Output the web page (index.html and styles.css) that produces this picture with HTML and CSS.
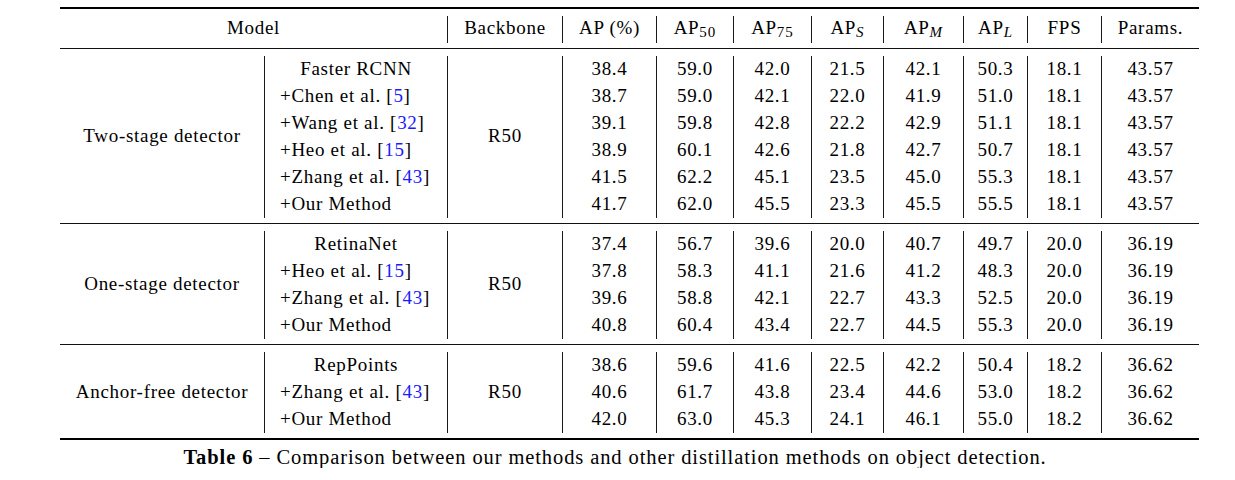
FILE: index.html
```html
<!DOCTYPE html>
<html>
<head>
<meta charset="utf-8">
<link rel="stylesheet" href="styles.css">
</head>
<body>
<div class="page">
<table class="results">
  <colgroup>
    <col class="c-group"><col class="c-method"><col class="c-bb"><col class="c-ap"><col class="c-ap50"><col class="c-ap75"><col class="c-aps"><col class="c-apm"><col class="c-apl"><col class="c-fps"><col class="c-params">
  </colgroup>
  <tr class="rule thick"><td colspan="11"></td></tr>
  <tr class="gap g-head-top"><td colspan="11"></td></tr>
  <tr class="head">
    <td colspan="2" class="first">Model</td>
    <td>Backbone</td>
    <td>AP (%)</td>
    <td>AP<sub>50</sub></td>
    <td>AP<sub>75</sub></td>
    <td>AP<sub class="it">S</sub></td>
    <td>AP<sub class="it">M</sub></td>
    <td>AP<sub class="it">L</sub></td>
    <td>FPS</td>
    <td>Params.</td>
  </tr>
  <tr class="gap g-before"><td colspan="11"></td></tr>
  <tr class="rule"><td colspan="11"></td></tr>
  <tr class="gap g-after"><td colspan="11"></td></tr>

  <tr>
    <td rowspan="6" class="first group">Two-stage detector</td>
    <td class="method base">Faster RCNN</td>
    <td rowspan="6">R50</td>
    <td>38.4</td><td>59.0</td><td>42.0</td><td>21.5</td><td>42.1</td><td>50.3</td><td>18.1</td><td>43.57</td>
  </tr>
  <tr>
    <td class="method">+Chen et al. [<span class="ref">5</span>]</td>
    <td>38.7</td><td>59.0</td><td>42.1</td><td>22.0</td><td>41.9</td><td>51.0</td><td>18.1</td><td>43.57</td>
  </tr>
  <tr>
    <td class="method">+Wang et al. [<span class="ref">32</span>]</td>
    <td>39.1</td><td>59.8</td><td>42.8</td><td>22.2</td><td>42.9</td><td>51.1</td><td>18.1</td><td>43.57</td>
  </tr>
  <tr>
    <td class="method">+Heo et al. [<span class="ref">15</span>]</td>
    <td>38.9</td><td>60.1</td><td>42.6</td><td>21.8</td><td>42.7</td><td>50.7</td><td>18.1</td><td>43.57</td>
  </tr>
  <tr>
    <td class="method">+Zhang et al. [<span class="ref">43</span>]</td>
    <td>41.5</td><td>62.2</td><td>45.1</td><td>23.5</td><td>45.0</td><td>55.3</td><td>18.1</td><td>43.57</td>
  </tr>
  <tr>
    <td class="method">+Our Method</td>
    <td>41.7</td><td>62.0</td><td>45.5</td><td>23.3</td><td>45.5</td><td>55.5</td><td>18.1</td><td>43.57</td>
  </tr>

  <tr class="gap g-before"><td colspan="11"></td></tr>
  <tr class="rule"><td colspan="11"></td></tr>
  <tr class="gap g-after"><td colspan="11"></td></tr>

  <tr>
    <td rowspan="4" class="first group">One-stage detector</td>
    <td class="method base">RetinaNet</td>
    <td rowspan="4">R50</td>
    <td>37.4</td><td>56.7</td><td>39.6</td><td>20.0</td><td>40.7</td><td>49.7</td><td>20.0</td><td>36.19</td>
  </tr>
  <tr>
    <td class="method">+Heo et al. [<span class="ref">15</span>]</td>
    <td>37.8</td><td>58.3</td><td>41.1</td><td>21.6</td><td>41.2</td><td>48.3</td><td>20.0</td><td>36.19</td>
  </tr>
  <tr>
    <td class="method">+Zhang et al. [<span class="ref">43</span>]</td>
    <td>39.6</td><td>58.8</td><td>42.1</td><td>22.7</td><td>43.3</td><td>52.5</td><td>20.0</td><td>36.19</td>
  </tr>
  <tr>
    <td class="method">+Our Method</td>
    <td>40.8</td><td>60.4</td><td>43.4</td><td>22.7</td><td>44.5</td><td>55.3</td><td>20.0</td><td>36.19</td>
  </tr>

  <tr class="gap g-before"><td colspan="11"></td></tr>
  <tr class="rule"><td colspan="11"></td></tr>
  <tr class="gap g-after"><td colspan="11"></td></tr>

  <tr>
    <td rowspan="3" class="first group">Anchor-free detector</td>
    <td class="method base">RepPoints</td>
    <td rowspan="3">R50</td>
    <td>38.6</td><td>59.6</td><td>41.6</td><td>22.5</td><td>42.2</td><td>50.4</td><td>18.2</td><td>36.62</td>
  </tr>
  <tr>
    <td class="method">+Zhang et al. [<span class="ref">43</span>]</td>
    <td>40.6</td><td>61.7</td><td>43.8</td><td>23.4</td><td>44.6</td><td>53.0</td><td>18.2</td><td>36.62</td>
  </tr>
  <tr>
    <td class="method">+Our Method</td>
    <td>42.0</td><td>63.0</td><td>45.3</td><td>24.1</td><td>46.1</td><td>55.0</td><td>18.2</td><td>36.62</td>
  </tr>

  <tr class="gap g-before"><td colspan="11"></td></tr>
  <tr class="rule thick"><td colspan="11"></td></tr>
</table>
<p class="caption"><b>Table 6</b> – Comparison between our methods and other distillation methods on object detection.</p>
</div>
</body>
</html>
```

FILE: styles.css
```css
html, body {
  margin: 0;
  padding: 0;
  background: #ffffff;
}

.page {
  padding: 7px 0 0 60px;
  font-family: "Liberation Serif", "Times New Roman", serif;
  font-size: 19px;
  letter-spacing: 0.7px;
  color: #000;
}

.results {
  border-collapse: separate;
  border-spacing: 0;
  table-layout: fixed;
  width: 1139px;
}

.c-group { width: 204px; }
.c-method { width: 183px; }
.c-bb { width: 115px; }
.c-ap { width: 94px; }
.c-ap50 { width: 77px; }
.c-ap75 { width: 78px; }
.c-aps { width: 72px; }
.c-apm { width: 80px; }
.c-apl { width: 64px; }
.c-fps { width: 74px; }
.c-params { width: 98px; }

.results td {
  padding: 0 0 2px 0;
  height: 25px;
  text-align: center;
  vertical-align: middle;
  white-space: nowrap;
  border-left: 1px solid #1a1a1a;
  line-height: 20px;
}

.results td.first {
  border-left: none;
}

.results td.method {
  text-align: left;
  padding-left: 15px;
}

.results td.method.base {
  text-align: center;
  padding-left: 0;
}

.results tr.head td {
  padding-bottom: 3px;
  height: 24px;
}

.results tr.rule td,
.results tr.gap td {
  border-left: none;
  padding: 0;
  line-height: 0;
  font-size: 0;
}

.results tr.rule td {
  height: 0;
  border-top: 1px solid #111;
}

.results tr.rule.thick td {
  border-top: 2px solid #000;
}

.results tr.g-head-top td { height: 7px; }
.results tr.g-before td { height: 5px; }
.results tr.g-after td { height: 7px; }

.results sub {
  font-size: 15px;
  vertical-align: -3px;
  line-height: 0;
  letter-spacing: 1px;
}

.results sub.it {
  font-style: italic;
}

.ref {
  color: #1a1aff;
}

.caption {
  margin: 6px 0 0 0;
  width: 1110px;
  text-align: center;
  line-height: 22px;
  font-size: 20.5px;
  letter-spacing: 0.9px;
}

.caption b {
  font-weight: bold;
}
```
